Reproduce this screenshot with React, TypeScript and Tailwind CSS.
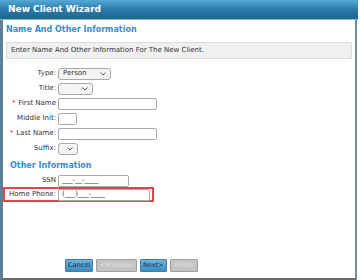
import React from 'react';

const font = { fontFamily: '"DejaVu Sans", Verdana, sans-serif' };

function Row({ label, required, children }: { label: string; required?: boolean; children: React.ReactNode }) {
  return (
    <div className="flex h-[15px] items-center">
      <div className="w-[52px] shrink-0 pr-[2px] text-right text-[7px] text-[#333]">
        {required && <span className="mr-[3px] text-[#e03030]">*</span>}
        {label}
      </div>
      {children}
    </div>
  );
}

function Select({ value, width }: { value?: string; width: string }) {
  return (
    <div className={`flex h-[12px] items-center justify-between rounded-[3px] border border-[#a9a9a9] bg-[#f4f4f4] pl-[4px] pr-[4px] text-[7px] text-[#333] ${width}`}>
      <span>{value}</span>
      <svg width="6" height="4" viewBox="0 0 6 4" fill="none" stroke="#444" strokeWidth="0.9">
        <path d="M0.5 0.5 L3 3 L5.5 0.5" />
      </svg>
    </div>
  );
}

function Input({ width, value }: { width: string; value?: string }) {
  return (
    <div className={`flex h-[12px] items-center rounded-[2px] border border-[#a9a9a9] bg-white pl-[3px] text-[7px] text-[#333] ${width}`}>
      {value}
    </div>
  );
}

export default function App() {
  return (
    <div className="flex h-[280px] w-[360px] flex-col overflow-hidden bg-white" style={font}>
      <div className="mr-[2px] flex h-[20px] items-center border-b border-[#7fb6d6] bg-gradient-to-b from-[#56a8d6] via-[#2a7aa8] to-[#1c6790] pl-[8px] text-[9px] font-bold text-white">
        New Client Wizard
      </div>
      <div className="mr-[3px] flex flex-1 border-l-[3px] border-r-[2px] border-b-[2px] border-l-[#5f8096] border-r-[#6f8c9e] border-b-[#6b6b6b]">
        <div className="flex flex-1 flex-col pl-[3px] pr-[3px] pt-[4px]">
          <div className="text-[8px] font-bold text-[#3b8cc6]">Name And Other Information</div>
          <div className="mt-[6px] flex h-[17px] items-center border border-[#dcdcdc] bg-[#f0f0f0] pl-[4px] text-[7px] text-[#333]">
            Enter Name And Other Information For The New Client.
          </div>
          <div className="mt-[7px] flex flex-col">
            <Row label="Type:">
              <Select value="Person" width="w-[53px]" />
            </Row>
            <Row label="Title:">
              <Select width="w-[35px]" />
            </Row>
            <Row label="First Name" required>
              <Input width="w-[99px]" />
            </Row>
            <Row label="Middle Init:">
              <Input width="w-[19px]" />
            </Row>
            <Row label="Last Name:" required>
              <Input width="w-[99px]" />
            </Row>
            <Row label="Suffix:">
              <Select width="w-[20px]" />
            </Row>
          </div>
          <div className="mt-[4px] pl-[4px] text-[8px] font-bold text-[#3b8cc6]">Other Information</div>
          <div className="mt-[1px] flex flex-col">
            <Row label="SSN">
              <Input width="w-[71px]" value="___-__-____" />
            </Row>
            <div className="-ml-[3px] -mt-[1px] w-[151px] border-2 border-[#e04848]">
              <div className="-ml-[2px] flex h-[11px] items-center">
                <div className="w-[55px] shrink-0 pr-[2px] text-right text-[7px] text-[#333]">Home Phone:</div>
                <Input width="w-[92px]" value="(___)___-____" />
              </div>
            </div>
          </div>
          <div className="mt-auto mb-[6px] flex gap-[3px] pl-[59px]">
            <div className="flex h-[13px] items-center rounded-[1px] border border-[#3d7fa8] bg-gradient-to-b from-[#6fb4dc] to-[#3a8cc0] px-[2px] text-[6.5px] text-[#0d2f47]">Cancel</div>
            <div className="flex h-[13px] items-center rounded-[1px] border border-[#a0a0a0] bg-[#c4c4c4] px-[3px] text-[6.5px] text-[#e2e2e2]">&lt;Previous</div>
            <div className="flex h-[13px] items-center rounded-[1px] border border-[#3d7fa8] bg-gradient-to-b from-[#6fb4dc] to-[#3a8cc0] px-[2px] text-[6.5px] text-[#0d2f47]">Next&gt;</div>
            <div className="flex h-[13px] items-center rounded-[1px] border border-[#a0a0a0] bg-[#c4c4c4] px-[4px] text-[6.5px] text-[#e2e2e2]">Finish</div>
          </div>
        </div>
      </div>
    </div>
  );
}
